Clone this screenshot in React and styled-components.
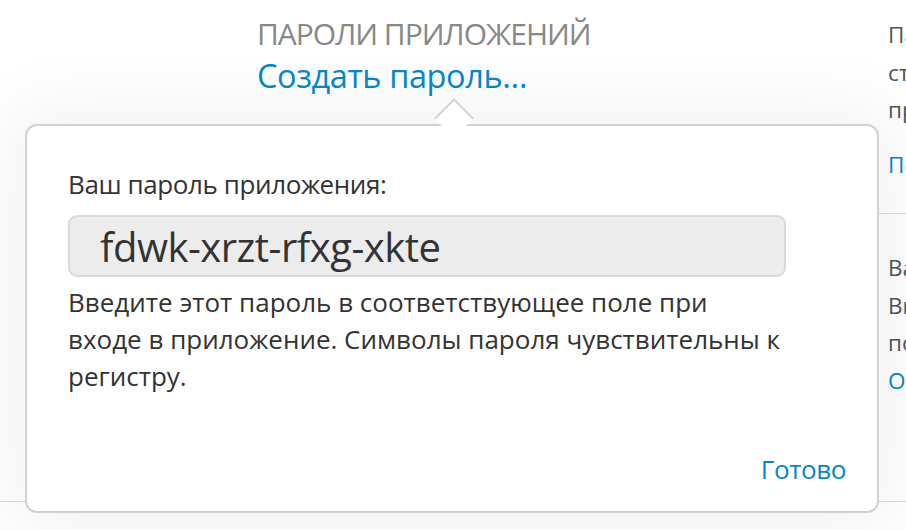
import React from "react";
import styled, { createGlobalStyle } from "styled-components";

const Global = createGlobalStyle`
  html, body { margin: 0; padding: 0; background: #fff; }
  body { font-family: "Open Sans", "Noto Sans", sans-serif; overflow: hidden; }
  * { box-sizing: border-box; }
`;

const Page = styled.div`
  position: relative;
  width: 906px;
  height: 530px;
  overflow: hidden;
  background: #fff;
`;

const Main = styled.div`
  display: flex;
  height: 502px;
  padding-left: 257px;
  border-bottom: 1px solid #dcdcdc;
`;

const LeftColumn = styled.div`
  flex: none;
  width: 601px;
  padding-top: 14px;
`;

const SectionTitle = styled.div`
  font-size: 30px;
  line-height: 40px;
  color: #888;
  letter-spacing: -1px;
  white-space: nowrap;
`;

const Link = styled.div`
  font-size: 32.5px;
  line-height: 44px;
  color: #0388cf;
  letter-spacing: -0.4px;
  white-space: nowrap;
`;

const RightColumn = styled.div`
  flex: none;
  width: 320px;
  padding-top: 16px;
`;

const Group = styled.div`
  padding: ${(p) => (p.$first ? "0 0 30px 30px" : "35px 0 0 30px")};
  border-bottom: ${(p) => (p.$first ? "1px solid #dcdcdc" : "none")};
`;

const SideLine = styled.div`
  font-size: 22.5px;
  line-height: 37.5px;
  color: ${(p) => (p.$link ? "#0388cf" : "#555")};
  white-space: nowrap;
  margin-top: ${(p) => (p.$gap ? "17px" : "0")};
`;

const Popover = styled.div`
  position: absolute;
  left: 25px;
  top: 124px;
  width: 854px;
  height: 389px;
  background: #fff;
  border: 2px solid #d2d2d2;
  border-radius: 12px;
  box-shadow: 0 0 70px 18px rgba(0, 0, 0, 0.055);
  padding: 40px 43px 0 41px;
  display: flex;
  flex-direction: column;
`;

const Arrow = styled.div`
  position: absolute;
  left: 413px;
  top: -22px;
  width: 28px;
  height: 28px;
  background: #fff;
  border-top: 2px solid #d2d2d2;
  border-left: 2px solid #d2d2d2;
  transform: rotate(45deg);
`;

const Label = styled.div`
  font-size: 26px;
  line-height: 36px;
  color: #333;
  letter-spacing: -0.4px;
`;

const Field = styled.div`
  width: 718px;
  height: 62px;
  margin-top: 13px;
  background: #ececec;
  border: 2px solid #dadada;
  border-radius: 9px;
  padding-left: 30px;
  display: flex;
  align-items: center;
  font-size: 40px;
  color: #333;
  letter-spacing: -0.5px;
`;

const Description = styled.p`
  width: 760px;
  margin: 7px 0 0;
  font-size: 26px;
  line-height: 37px;
  color: #333;
  letter-spacing: 0;
  white-space: nowrap;
`;

const Footer = styled.div`
  margin-top: auto;
  display: flex;
  justify-content: flex-end;
`;

const Done = styled.button`
  border: none;
  background: none;
  padding: 0;
  margin-right: -12px;
  margin-bottom: 25px;
  font-family: inherit;
  font-size: 26px;
  line-height: 34px;
  color: #0388cf;
  letter-spacing: -0.4px;
  cursor: pointer;
`;

export default function App() {
  return (
    <Page>
      <Global />
      <Main>
        <LeftColumn>
          <SectionTitle>ПАРОЛИ ПРИЛОЖЕНИЙ</SectionTitle>
          <Link>Создать пароль…</Link>
        </LeftColumn>
        <RightColumn>
          <Group $first>
            <SideLine>Пароли приложений позволяют</SideLine>
            <SideLine>сторонним приложениям</SideLine>
            <SideLine>проверять вашу учетную запись.</SideLine>
            <SideLine $link $gap>Подробнее</SideLine>
          </Group>
          <Group>
            <SideLine>Ваши доверенные устройства</SideLine>
            <SideLine>Вы можете удалить устройство</SideLine>
            <SideLine>получающее коды проверки.</SideLine>
            <SideLine $link>Открыть список</SideLine>
          </Group>
        </RightColumn>
      </Main>
      <Popover>
        <Arrow />
        <Label>Ваш пароль приложения:</Label>
        <Field>fdwk-xrzt-rfxg-xkte</Field>
        <Description>
          Введите этот пароль в соответствующее поле при
          <br />
          входе в приложение. Символы пароля чувствительны к
          <br />
          регистру.
        </Description>
        <Footer>
          <Done>Готово</Done>
        </Footer>
      </Popover>
    </Page>
  );
}
